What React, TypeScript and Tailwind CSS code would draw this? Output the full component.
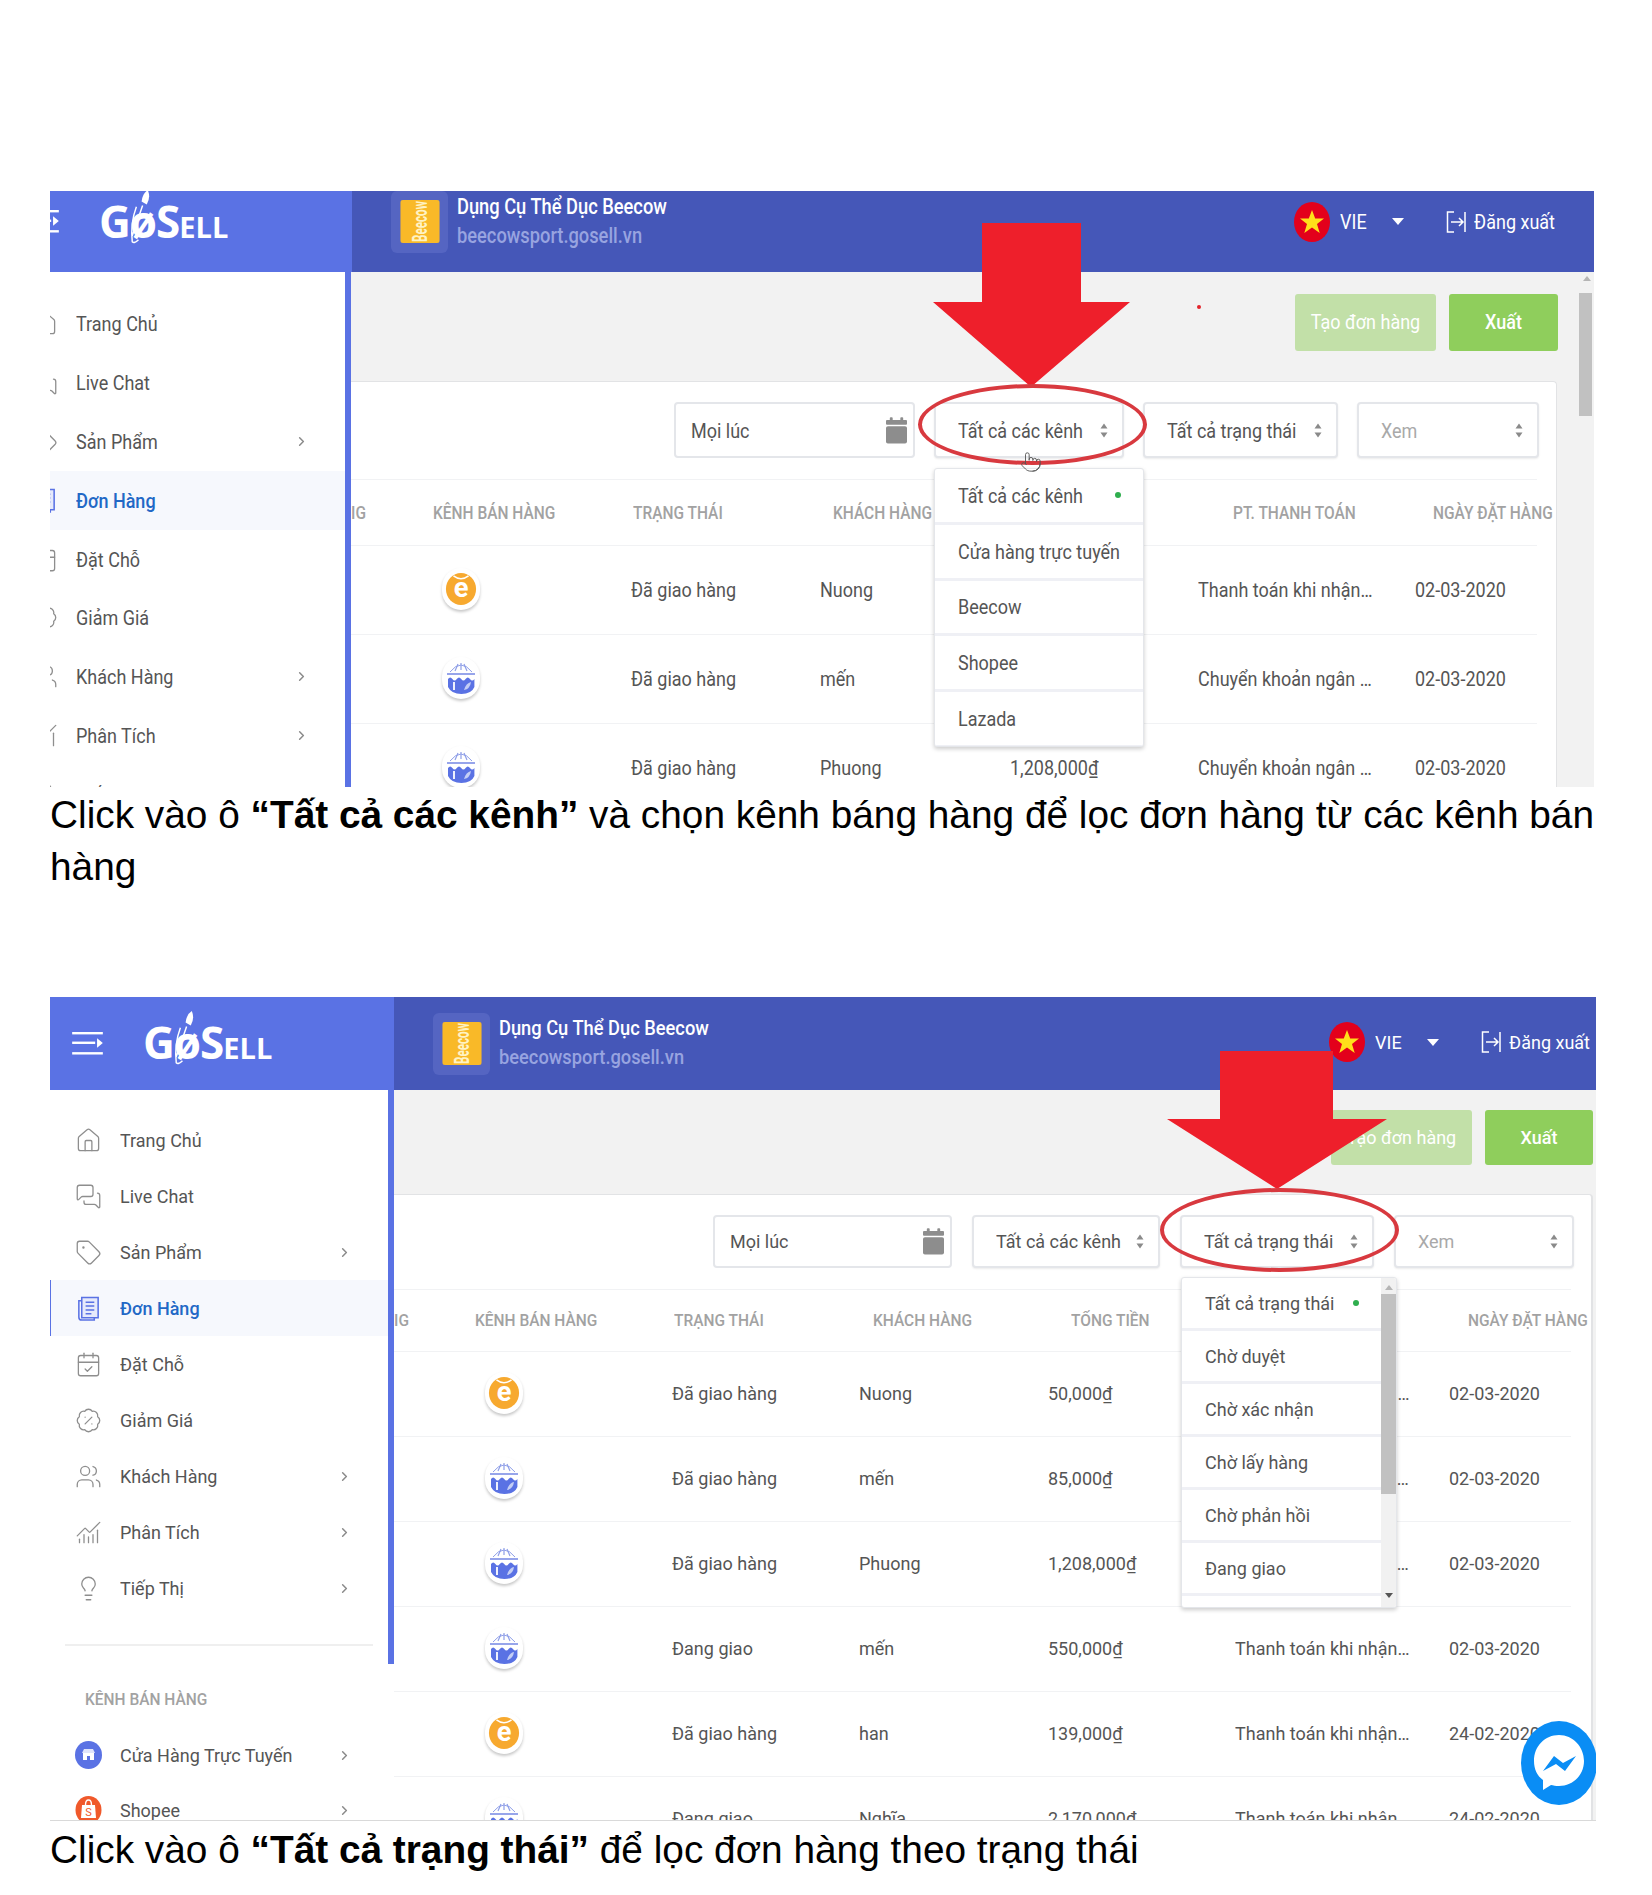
import {
  BadgePercent,
  CalendarCheck,
  ChartNoAxesCombined,
  ChevronRight,
  House,
  Lightbulb,
  MessagesSquare,
  Pointer,
  Tag,
  Users,
} from "lucide-react";
import type { ReactNode } from "react";

function OrdersIcon({ size, className }: { size: number; strokeWidth?: number; className?: string }) {
  return (
    <svg viewBox="0 0 26 28" width={size} height={size} fill="none" stroke="currentColor" strokeWidth="1.6" className={className}>
      <path d="M6 2.500h17v21H6Z" fill="#e6eafb" />
      <path d="M6 6H3v17q0 3 3 3h13v-2.500" />
      <path d="M10 7.500h9M10 11.500h9M10 15.500h9M10 19.500h6" />
    </svg>
  );
}

const sideItems = [
  { label: "Trang Chủ", Icon: House },
  { label: "Live Chat", Icon: MessagesSquare },
  { label: "Sản Phẩm", Icon: Tag, more: true },
  { label: "Đơn Hàng", Icon: OrdersIcon, active: true },
  { label: "Đặt Chỗ", Icon: CalendarCheck },
  { label: "Giảm Giá", Icon: BadgePercent },
  { label: "Khách Hàng", Icon: Users, more: true },
  { label: "Phân Tích", Icon: ChartNoAxesCombined, more: true },
  { label: "Tiếp Thị", Icon: Lightbulb, more: true },
];

const orders = [
  { shop: "e", status: "Đã giao hàng", name: "Nuong", total: "50,000₫", pay: "Thanh toán khi nhận…", date: "02-03-2020" },
  { shop: "b", status: "Đã giao hàng", name: "mến", total: "85,000₫", pay: "Chuyển khoản ngân …", date: "02-03-2020" },
  { shop: "b", status: "Đã giao hàng", name: "Phuong", total: "1,208,000₫", pay: "Chuyển khoản ngân …", date: "02-03-2020" },
  { shop: "b", status: "Đang giao", name: "mến", total: "550,000₫", pay: "Thanh toán khi nhận…", date: "02-03-2020" },
  { shop: "e", status: "Đã giao hàng", name: "han", total: "139,000₫", pay: "Thanh toán khi nhận…", date: "24-02-2020" },
  { shop: "b", status: "Đang giao", name: "Nghĩa", total: "2,170,000₫", pay: "Thanh toán khi nhận…", date: "24-02-2020" },
];

const headers = ["IG", "KÊNH BÁN HÀNG", "TRẠNG THÁI", "KHÁCH HÀNG", "TỔNG TIỀN", "PT. THANH TOÁN", "NGÀY ĐẶT HÀNG"];

function Tx({ children, className = "" }: { children: ReactNode; className?: string }) {
  return <span className={`tx inline-block whitespace-nowrap ${className}`}>{children}</span>;
}

function ShopIcon({ type }: { type: string }) {
  return (
    <div className="flex h-[42px] w-[38px] items-center justify-center rounded-full bg-white shadow-[0_2px_3px_rgba(0,0,0,0.22)]">
      {type === "e" ? (
        <svg viewBox="0 0 34 36" className="h-[36px] w-[32px]">
          <ellipse cx="17" cy="18" rx="16" ry="17" fill="#f7a92f" />
          <path d="M9 4q8 6 16 0" fill="none" stroke="#fff" strokeWidth="1.6" />
          <text x="17" y="27" textAnchor="middle" fontSize="29" fontWeight="700" fontFamily="Roboto, sans-serif" fill="#fff">
            e
          </text>
        </svg>
      ) : (
        <svg viewBox="0 0 34 36" className="h-[38px] w-[34px]">
          <path d="M6 12q11-14 22 0" fill="none" stroke="#8f9fe8" strokeWidth="1" />
          <path d="M11 11l3-7M17 10V3M23 11l-3-7" stroke="#8f9fe8" strokeWidth="1.2" />
          <path d="M3 14h28" stroke="#7d8fe6" strokeWidth="1.6" />
          <path d="M4 19q2.200-3 4.400 0t4.400 0 4.400 0 4.400 0 4.400 0 4.400 0V27q-3 7-13 7T4 27Z" fill="#5a72e4" />
          <path d="M10 22v8" stroke="#fff" strokeWidth="1.8" />
          <path d="M20 30q2-7 7-8-1 7-7 8Z" fill="#c4cef5" />
        </svg>
      )}
    </div>
  );
}

function UpDown() {
  return (
    <svg viewBox="0 0 8 16" className="h-[17px] w-[8px] shrink-0 fill-[#8a8a8a]">
      <path d="M4 1l3.500 5h-7ZM4 15L.5 10h7Z" />
    </svg>
  );
}

function CalendarSolid() {
  return (
    <svg viewBox="0 0 22 28" className="h-[27px] w-[21px] fill-[#8d8d8d]">
      <rect x="4" y="0" width="3" height="6" rx="1" />
      <rect x="15" y="0" width="3" height="6" rx="1" />
      <rect x="0" y="3" width="22" height="5" rx="1" />
      <rect x="0" y="9.500" width="22" height="18" rx="2" />
    </svg>
  );
}

function FilterBox({ label, className, muted }: { label: string; className: string; muted?: boolean }) {
  return (
    <div className={`flex items-center justify-between rounded-[4px] border-2 border-[#e4e6ea] bg-white pr-[14px] pl-[22px] text-[18px] shadow-[0_1px_2px_rgba(0,0,0,0.08)] ${muted ? "text-[#a9a9a9]" : "text-[#555]"} ${className}`}>
      <Tx>{label}</Tx>
      <UpDown />
    </div>
  );
}

function Logo() {
  return (
    <div className="relative flex items-baseline font-['Open_Sans',sans-serif] font-bold text-white">
      <span className="text-[44px] leading-none tracking-[-1px]">GøS</span>
      <span className="text-[29px] leading-none">ELL</span>
      <svg viewBox="0 0 24 56" fill="none" className="absolute top-[-11px] left-[28px] h-[58px] w-[25px]">
        <path d="M20 2q3 7-1 14l-5-3q1-8 6-11Z" fill="#fff" />
        <path d="M15 17 5 46M9 18q-6 16-4 34 2 2 6-2" stroke="#fff" strokeWidth="1.4" />
      </svg>
    </div>
  );
}

function Hamburger() {
  return (
    <svg viewBox="0 0 32 24" className="h-[23px] w-[31px]" fill="#fff">
      <rect y="0" width="32" height="2.500" />
      <rect y="10" width="24" height="2.500" />
      <path d="M26 6.500l6 5-6 5Z" />
      <rect y="21" width="32" height="2.500" />
    </svg>
  );
}

function BeecowTile() {
  return (
    <div className="flex h-[62px] w-[57px] shrink-0 items-center justify-center rounded-[6px] bg-[#5565c2]">
      <svg viewBox="0 0 40 44" className="h-[43px] w-[40px] rounded-[3px]">
        <rect width="40" height="44" fill="#f9b928" />
        <text x="-22" y="27" transform="rotate(-90)" textAnchor="middle" fontSize="21" textLength="42" lengthAdjust="spacingAndGlyphs" fontWeight="700" fontFamily="Roboto, sans-serif" fill="#fff3c4">
          Beecow
        </text>
      </svg>
    </div>
  );
}

function TopBar({ className, sideClass, rightClass, children }: { className: string; sideClass: string; rightClass: string; children: ReactNode }) {
  return (
    <div className={`flex shrink-0 bg-[#4557b8] text-white ${className}`}>
      <div className={`flex shrink-0 items-center overflow-hidden bg-[#5a72e4] ${sideClass}`}>{children}</div>
      <div className="flex flex-1 items-center">
        <div className="ml-[39px]">
          <BeecowTile />
        </div>
        <div className="ml-[9px] flex flex-col gap-[7px]">
          <Tx className="text-[18.300px] leading-[22px] font-medium">Dụng Cụ Thể Dục Beecow</Tx>
          <Tx className="text-[18.300px] leading-[22px] font-medium text-[#98a4e0]">beecowsport.gosell.vn</Tx>
        </div>
        <div className={`ml-auto flex items-center ${rightClass}`}>
          <svg viewBox="0 0 36 40" className="h-[40px] w-[36px]">
            <ellipse cx="18" cy="20" rx="18" ry="20" fill="#e3001b" />
            <path d="M18 8l3.200 8.500h8.800l-7 5.500 2.700 9L18 25.500 10.300 31l2.700-9-7-5.500h8.800Z" fill="#ffe01a" />
          </svg>
          <Tx className="ml-[10px] w-[52px] text-[18px]">VIE</Tx>
          <svg viewBox="0 0 12 7" className="h-[7px] w-[12px] fill-white">
            <path d="M0 0h12L6 7Z" />
          </svg>
          <svg viewBox="0 0 20 24" fill="none" stroke="#fff" strokeWidth="1.500" className="ml-[42px] h-[24px] w-[20px]">
            <path d="M8 2H1.500v20H8M5 12h12M13 8l4 4-4 4M19 2v20" />
          </svg>
          <Tx className="ml-[8px] text-[18px]">Đăng xuất</Tx>
        </div>
      </div>
    </div>
  );
}

function SideRow({ item, className }: { item: (typeof sideItems)[number]; className: string }) {
  const { label, Icon, more, active } = item;
  return (
    <div className={`flex items-center text-[18px] ${active ? "border-l border-[#5a72e4] bg-[#f6f8fd] pl-[24px] font-medium text-[#2268c6]" : "pl-[25px] text-[#555]"} ${className}`}>
      <Icon size={27} strokeWidth={1.15} className={active ? "text-[#5a72e4]" : "text-[#8e8e8e]"} />
      <Tx className="ml-[18px]">{label}</Tx>
      {more && <ChevronRight size={15} strokeWidth={2.4} className="mr-[36px] ml-auto text-[#8a8a8a]" />}
    </div>
  );
}

function Messenger() {
  return (
    <svg viewBox="0 0 76 84" className="h-[84px] w-[76px]">
      <ellipse cx="38" cy="42" rx="38" ry="42" fill="#0a8df5" />
      <path d="M38 14c-14 0-25 11-25 26 0 8 3 15 9 19v10l8-5c2 .5 5 1 8 1 14 0 25-11 25-25S52 14 38 14Z" fill="#fff" />
      <path d="M22 50l11-15 9 7 13-7-11 15-9-7Z" fill="#0a8df5" />
    </svg>
  );
}

function Dropdown({ className, items, scroll }: { className: string; items: string[]; scroll?: boolean }) {
  return (
    <div className={`absolute flex overflow-hidden rounded-[3px] border border-[#e4e6ea] bg-white text-[18px] text-[#555] shadow-[0_2px_4px_rgba(0,0,0,0.2)] ${className}`}>
      <div className="flex-1">
        {items.map((it, i) => (
          <div key={it} className={`flex items-center justify-between border-b-[3px] border-[#eff0f5] pr-[22px] pl-[23px] ${scroll ? "h-[53px]" : "h-[55.800px]"}`}>
            <Tx>{it}</Tx>
            {i === 0 && <span className="h-[6px] w-[6px] rounded-full bg-[#2fae4e]" />}
          </div>
        ))}
      </div>
      {scroll && (
        <div className="flex w-[15px] flex-col items-center bg-[#f1f1f1]">
          <svg viewBox="0 0 8 5" className="mt-[7px] mb-[4px] h-[5px] w-[8px] fill-[#b5b5b5]">
            <path d="M4 0l4 5H0Z" />
          </svg>
          <div className="h-[200px] w-full bg-[#c1c1c1]" />
          <svg viewBox="0 0 8 5" className="mt-auto mb-[9px] h-[5px] w-[8px] fill-[#555]">
            <path d="M4 5l4-5H0Z" />
          </svg>
        </div>
      )}
    </div>
  );
}

function Ring({ className }: { className: string }) {
  return <div className={`pointer-events-none absolute rounded-[50%] border-[4px] border-[#d8393f] ${className}`} />;
}

function OrderRow({ order, className }: { order: (typeof orders)[number]; className: string }) {
  return (
    <div className={`grid items-center border-b border-[#f1f2f4] pb-[2px] text-[18px] text-[#555] ${className}`}>
      <div className="pl-[91px]">
        <ShopIcon type={order.shop} />
      </div>
      <Tx>{order.status}</Tx>
      <Tx>{order.name}</Tx>
      <Tx>{order.total}</Tx>
      <Tx>{order.pay}</Tx>
      <Tx>{order.date}</Tx>
    </div>
  );
}

function HeaderRow({ className }: { className: string }) {
  return (
    <div className={`grid shrink-0 items-center border-y border-[#f1f2f4] pt-[2px] text-[15.500px] font-medium text-[#a2a2a2] ${className}`}>
      {headers.map((h) => (
        <Tx key={h}>{h}</Tx>
      ))}
    </div>
  );
}

function Sidebar({ className, children }: { className: string; children: ReactNode }) {
  return <div className={`shrink-0 overflow-hidden bg-white ${className}`}>{children}</div>;
}

export default function App() {
  return (
    <div className="h-[1895px] w-[1652px] overflow-hidden bg-white pt-[191px] pl-[50px] font-['Roboto',sans-serif]">
      {/* first shot */}
      <div className="relative flex h-[596px] w-[1544px] flex-col overflow-hidden [&_.tx]:scale-y-[1.16]">
        <TopBar className="h-[81px] pb-[20px]" sideClass="-mb-[20px] h-[81px] w-[302px]" rightClass="pr-[39px]">
          <div className="-ml-[22px] pb-[20px]">
            <Hamburger />
          </div>
          <div className="ml-[40px] pb-[22px]">
            <Logo />
          </div>
        </TopBar>
        <div className="flex min-h-0 flex-1">
          <Sidebar className="w-[295px] pt-[22px]">
            <div className="-ml-[44px] w-[339px]">
              {sideItems.map((it) => (
                <SideRow key={it.label} item={it} className="h-[58.900px]" />
              ))}
            </div>
          </Sidebar>
          <div className="w-[6px] shrink-0 bg-[#5a72e4]" />
          <div className="flex min-w-0 flex-1 flex-col bg-[#f2f2f2]">
            <div className="flex h-[109px] shrink-0">
              <div className="flex flex-1 justify-end gap-[13px] pt-[22px] pr-[1px]">
                <div className="flex h-[57px] w-[141px] items-center justify-center rounded-[3px] bg-[#c2e0a8] pb-[2px] text-[18px] text-white">
                  <Tx>Tạo đơn hàng</Tx>
                </div>
                <div className="flex h-[57px] w-[109px] items-center justify-center rounded-[3px] bg-[#8fce5c] pb-[2px] text-[18px] font-medium text-white">
                  <Tx>Xuất</Tx>
                </div>
              </div>
              <div className="ml-[21px] flex w-[14px] flex-col items-center pt-[4px]">
                <svg viewBox="0 0 8 5" className="h-[5px] w-[8px] fill-[#b5b5b5]">
                  <path d="M4 0l4 5H0Z" />
                </svg>
              </div>
            </div>
            <div className="flex min-h-0 flex-1">
              <div className="flex w-[1206px] shrink-0 flex-col overflow-hidden rounded-tr-[4px] border-t border-r border-[#e2e3e5] bg-white">
                <div className="flex h-[97px] shrink-0 items-start justify-end gap-[19px] pt-[20px] pr-[17px]">
                  <div className="flex h-[56px] w-[241px] items-center justify-between rounded-[4px] border-2 border-[#e4e6ea] pr-[6px] pl-[15px] text-[18px] text-[#555]">
                    <Tx>Mọi lúc</Tx>
                    <CalendarSolid />
                  </div>
                  <FilterBox label="Tất cả các kênh" className="h-[56px] w-[190px]" />
                  <FilterBox label="Tất cả trạng thái" className="h-[56px] w-[195px]" />
                  <FilterBox label="Xem" className="h-[56px] w-[182px]" muted />
                </div>
                <div className="mr-[19px]">
                  <HeaderRow className="h-[67px] grid-cols-[82px_200px_200px_200px_200px_200px_1fr]" />
                  {orders.slice(0, 3).map((o) => (
                    <OrderRow key={o.name + o.total} order={o} className="h-[89px] grid-cols-[280px_189px_190px_188px_217px_1fr]" />
                  ))}
                </div>
              </div>
              <div className="ml-[22px] h-[123px] w-[13px] -translate-y-[88px] bg-[#c1c1c1]" />
            </div>
          </div>
        </div>

        <span className="absolute top-[114px] left-[1147px] h-[4px] w-[4px] rounded-full bg-[#e3242b]" />
        <svg className="absolute top-[32px] left-[883px] h-[164px] w-[197px]" viewBox="0 0 197 164">
          <polygon points="49,0 148,0 148,79 197,79 98,164 0,79 49,79" fill="#ee1f2b" />
        </svg>
        <Dropdown
          className="top-[277px] left-[884px] h-[279px] w-[210px] flex-col"
          items={["Tất cả các kênh", "Cửa hàng trực tuyến", "Beecow", "Shopee", "Lazada"]}
        />
        <Ring className="top-[193px] left-[868px] h-[81px] w-[229px]" />
        <Pointer size={22} strokeWidth={1} className="absolute top-[260px] left-[970px] text-[#555]" />
      </div>
      <p className="mt-[2px] w-[1544px] text-justify font-['Liberation_Sans',sans-serif] text-[38.800px] leading-[52px] text-black">
        Click vào ô <b>“Tất cả các kênh”</b> và chọn kênh báng hàng để lọc đơn hàng từ các kênh bán hàng
      </p>

      {/* second shot */}
      <div className="relative mt-[104px] flex h-[824px] w-[1546px] flex-col overflow-hidden border-b border-[#d9d9d9] [&_.tx]:scale-y-[1.06]">
        <TopBar className="h-[93px]" sideClass="w-[344px]" rightClass="pr-[6px] pb-[3px]">
          <div className="ml-[22px]">
            <Hamburger />
          </div>
          <div className="ml-[40px] pb-[4px]">
            <Logo />
          </div>
        </TopBar>
        <div className="flex min-h-0 flex-1">
          <Sidebar className="w-[338px] pt-[22px]">
            {sideItems.map((it) => (
              <SideRow key={it.label} item={it} className="h-[56px]" />
            ))}
            <div className="mx-[15px] mt-[28px] border-t-2 border-[#efefef]" />
            <div className="mt-[42px] mb-[15px] h-[24px] pl-[35px] text-[15.500px] leading-[24px] font-medium text-[#a2a2a2]">
              <Tx>KÊNH BÁN HÀNG</Tx>
            </div>
            <div className="flex h-[56px] items-center pl-[25px] text-[18px] text-[#555]">
              <svg viewBox="0 0 27 28" className="h-[28px] w-[27px]">
                <ellipse cx="13.500" cy="14" rx="13.500" ry="14" fill="#5a72e4" />
                <path d="M8 12h11v7H8Z" fill="#fff" />
                <path d="M7 12l2-4h9l2 4Z" fill="#dfe4fb" />
                <path d="M12 15h3v4h-3Z" fill="#5a72e4" />
              </svg>
              <Tx className="ml-[18px]">Cửa Hàng Trực Tuyến</Tx>
              <ChevronRight size={15} strokeWidth={2.4} className="mr-[36px] ml-auto text-[#8a8a8a]" />
            </div>
            <div className="flex h-[56px] items-center pb-[2px] pl-[25px] text-[18px] text-[#555]">
              <svg viewBox="0 0 27 28" className="h-[28px] w-[27px]">
                <ellipse cx="13.500" cy="14" rx="13" ry="14" fill="#f0592b" />
                <path d="M7 9h13l1 13H6Z" fill="#fff" />
                <path d="M10.500 9q0-5 3-5t3 5" fill="none" stroke="#fff" strokeWidth="1.4" />
                <text x="13.500" y="20" textAnchor="middle" fontSize="11" fontFamily="Roboto, sans-serif" fill="#f0592b">
                  S
                </text>
              </svg>
              <Tx className="ml-[18px]">Shopee</Tx>
              <ChevronRight size={15} strokeWidth={2.4} className="mr-[36px] ml-auto text-[#8a8a8a]" />
            </div>
          </Sidebar>
          <div className="flex shrink-0 flex-col bg-white">
            <div className="h-[574px] w-[6px] bg-[#5a72e4]" />
          </div>
          <div className="flex min-w-0 flex-1 flex-col bg-[#f2f2f2]">
            <div className="flex h-[104px] shrink-0 justify-end gap-[13px] pt-[20px] pr-[3px]">
              <div className="flex h-[55px] w-[141px] items-center justify-center rounded-[3px] bg-[#c2e0a8] text-[18px] text-white">
                <Tx>Tạo đơn hàng</Tx>
              </div>
              <div className="flex h-[55px] w-[108px] items-center justify-center rounded-[3px] bg-[#8fce5c] text-[18px] font-medium text-white">
                <Tx>Xuất</Tx>
              </div>
            </div>
            <div className="flex min-h-0 w-[1199px] flex-1 flex-col overflow-hidden rounded-tr-[4px] border-t border-r-2 border-[#e2e3e5] bg-white">
              <div className="flex h-[94px] shrink-0 items-start justify-end gap-[20px] pt-[20px] pr-[17px]">
                <div className="flex h-[53px] w-[239px] items-center justify-between rounded-[4px] border-2 border-[#e4e6ea] pr-[6px] pl-[15px] text-[18px] text-[#555]">
                  <Tx>Mọi lúc</Tx>
                  <CalendarSolid />
                </div>
                <FilterBox label="Tất cả các kênh" className="h-[53px] w-[188px]" />
                <FilterBox label="Tất cả trạng thái" className="h-[53px] w-[194px]" />
                <FilterBox label="Xem" className="h-[53px] w-[180px]" muted />
              </div>
              <div className="mr-[20px]">
                <HeaderRow className="h-[63px] grid-cols-[81px_199px_199px_198px_199px_198px_1fr]" />
                {orders.map((o) => (
                  <OrderRow key={o.name + o.total} order={o} className="h-[85px] grid-cols-[278px_187px_189px_187px_214px_1fr]" />
                ))}
              </div>
            </div>
          </div>
        </div>

        <svg className="absolute top-[54px] left-[1117px] h-[138px] w-[220px]" viewBox="0 0 220 138">
          <polygon points="53,0 166,0 166,68 220,68 110,138 0,68 53,68" fill="#ee1f2b" />
        </svg>
        <Dropdown
          scroll
          className="top-[280px] left-[1131px] h-[331px] w-[216px]"
          items={["Tất cả trạng thái", "Chờ duyệt", "Chờ xác nhận", "Chờ lấy hàng", "Chờ phản hồi", "Đang giao", "Đã giao hàng"]}
        />
        <Ring className="top-[191px] left-[1110px] h-[84px] w-[239px]" />
        <div className="absolute top-[724px] left-[1471px]">
          <Messenger />
        </div>
      </div>
      <p className="mt-[3px] font-['Liberation_Sans',sans-serif] text-[38.800px] leading-[52px] text-black">
        Click vào ô <b>“Tất cả trạng thái”</b> để lọc đơn hàng theo trạng thái
      </p>
    </div>
  );
}
